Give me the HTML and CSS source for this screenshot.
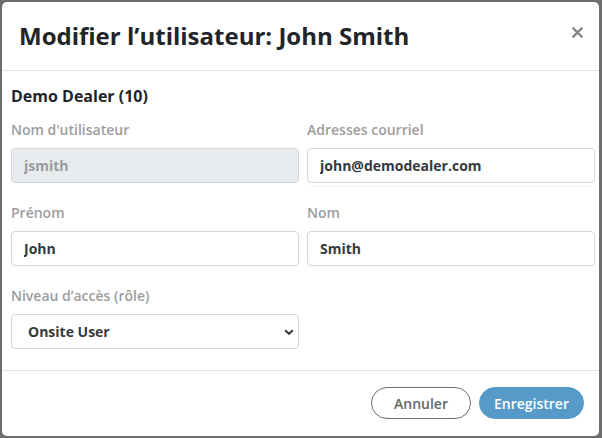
FILE: index.html
```html
<!DOCTYPE html>
<html lang="fr">
<head>
<meta charset="utf-8">
<title>Modifier l'utilisateur</title>
<link rel="stylesheet" href="styles.css">
</head>
<body>
<div class="modal">
  <div class="modal-header">
    <h1 class="modal-title">Modifier l’utilisateur: John Smith</h1>
    <button class="close" type="button" aria-label="Fermer">
      <svg width="11" height="11" viewBox="0 0 11 11"><path d="M1.5 1.5L9.5 9.5M9.5 1.5L1.5 9.5" stroke="#858585" stroke-width="2.4" stroke-linecap="square"/></svg>
    </button>
  </div>
  <div class="modal-body">
    <div class="dealer">Demo Dealer (10)</div>
    <div class="form-grid">
      <div class="field">
        <label class="label">Nom d'utilisateur</label>
        <input class="input" type="text" value="jsmith" disabled>
      </div>
      <div class="field field-email">
        <label class="label">Adresses courriel</label>
        <input class="input" type="text" value="john@demodealer.com">
      </div>
      <div class="field">
        <label class="label">Prénom</label>
        <input class="input" type="text" value="John">
      </div>
      <div class="field">
        <label class="label">Nom</label>
        <input class="input" type="text" value="Smith">
      </div>
      <div class="field">
        <label class="label">Niveau d’accès (rôle)</label>
        <div class="select">
          <span class="select-value">Onsite User</span>
          <svg class="chevron" width="10" height="6" viewBox="0 0 10 6"><path d="M1.2 1.2L5 4.8L8.8 1.2" fill="none" stroke="#343a40" stroke-width="2"/></svg>
        </div>
      </div>
    </div>
  </div>
  <div class="modal-footer">
    <button class="btn btn-outline" type="button">Annuler</button>
    <button class="btn btn-primary" type="button">Enregistrer</button>
  </div>
</div>
</body>
</html>
```

FILE: styles.css
```css
* { box-sizing: border-box; }
html, body { margin: 0; padding: 0; }
body {
  background: #6e6e6e;
  font-family: "Open Sans", "Liberation Sans", sans-serif;
  width: 602px;
  height: 438px;
  padding: 2px 3px 2px 2px;
}
.modal {
  background: #fff;
  border-radius: 5px;
  height: 434px;
  display: flex;
  flex-direction: column;
}
.modal-header {
  height: 69px;
  padding: 16px 16px 16px 17px;
  border-bottom: 1px solid #dfe2e8;
  display: flex;
  justify-content: space-between;
  align-items: flex-start;
}
.modal-title {
  margin: 0;
  font-size: 24px;
  line-height: 36px;
  font-weight: 700;
  color: #212529;
}
.close {
  border: 0;
  background: none;
  padding: 0;
  margin-top: 9px;
  width: 11px;
  height: 11px;
  display: flex;
}
.modal-body {
  flex: 1;
  padding: 15px 4px 0 9px;
}
.dealer {
  font-size: 16px;
  line-height: 20px;
  font-weight: 700;
  color: #212529;
  margin-bottom: 14px;
}
.form-grid {
  display: grid;
  grid-template-columns: 288px 288px;
  column-gap: 8px;
  row-gap: 20px;
}
.field { display: flex; flex-direction: column; }
.label {
  font-size: 14px;
  line-height: 20px;
  font-weight: 600;
  color: #9d9d9d;
  margin-bottom: 8px;
}
.input, .select {
  height: 35px;
  border: 1px solid #d3d6dc;
  border-radius: 4px;
  background: #fff;
  font-family: "Open Sans", "Liberation Sans", sans-serif;
  font-size: 14px;
  font-weight: 700;
  color: #343a40;
  padding: 0 12px;
  width: 100%;
}
.input:disabled {
  background: #e9ecef;
  color: #999;
  opacity: 1;
}
.field-email::after {
  content: "";
  display: block;
  height: 1px;
  margin: 3px 3px 0 3px;
  background: #eef0f6;
}
.field-email { margin-bottom: -4px; }
.select {
  display: flex;
  align-items: center;
  justify-content: space-between;
  padding: 0 4px 0 16px;
}
.chevron { margin-top: 1px; }
.modal-footer {
  border-top: 1px solid #dfe2e8;
  height: 66px;
  padding: 16px 15px 17px 0;
  display: flex;
  justify-content: flex-end;
  gap: 8px;
}
.btn {
  height: 32px;
  border-radius: 16px;
  font-family: "Open Sans", "Liberation Sans", sans-serif;
  font-size: 14px;
  font-weight: 600;
  padding: 0;
}
.btn-outline {
  width: 100px;
  background: #fff;
  border: 1px solid #707070;
  color: #666;
}
.btn-primary {
  width: 105px;
  background: #559ac9;
  border: 1px solid #559ac9;
  color: #fff;
}
```
